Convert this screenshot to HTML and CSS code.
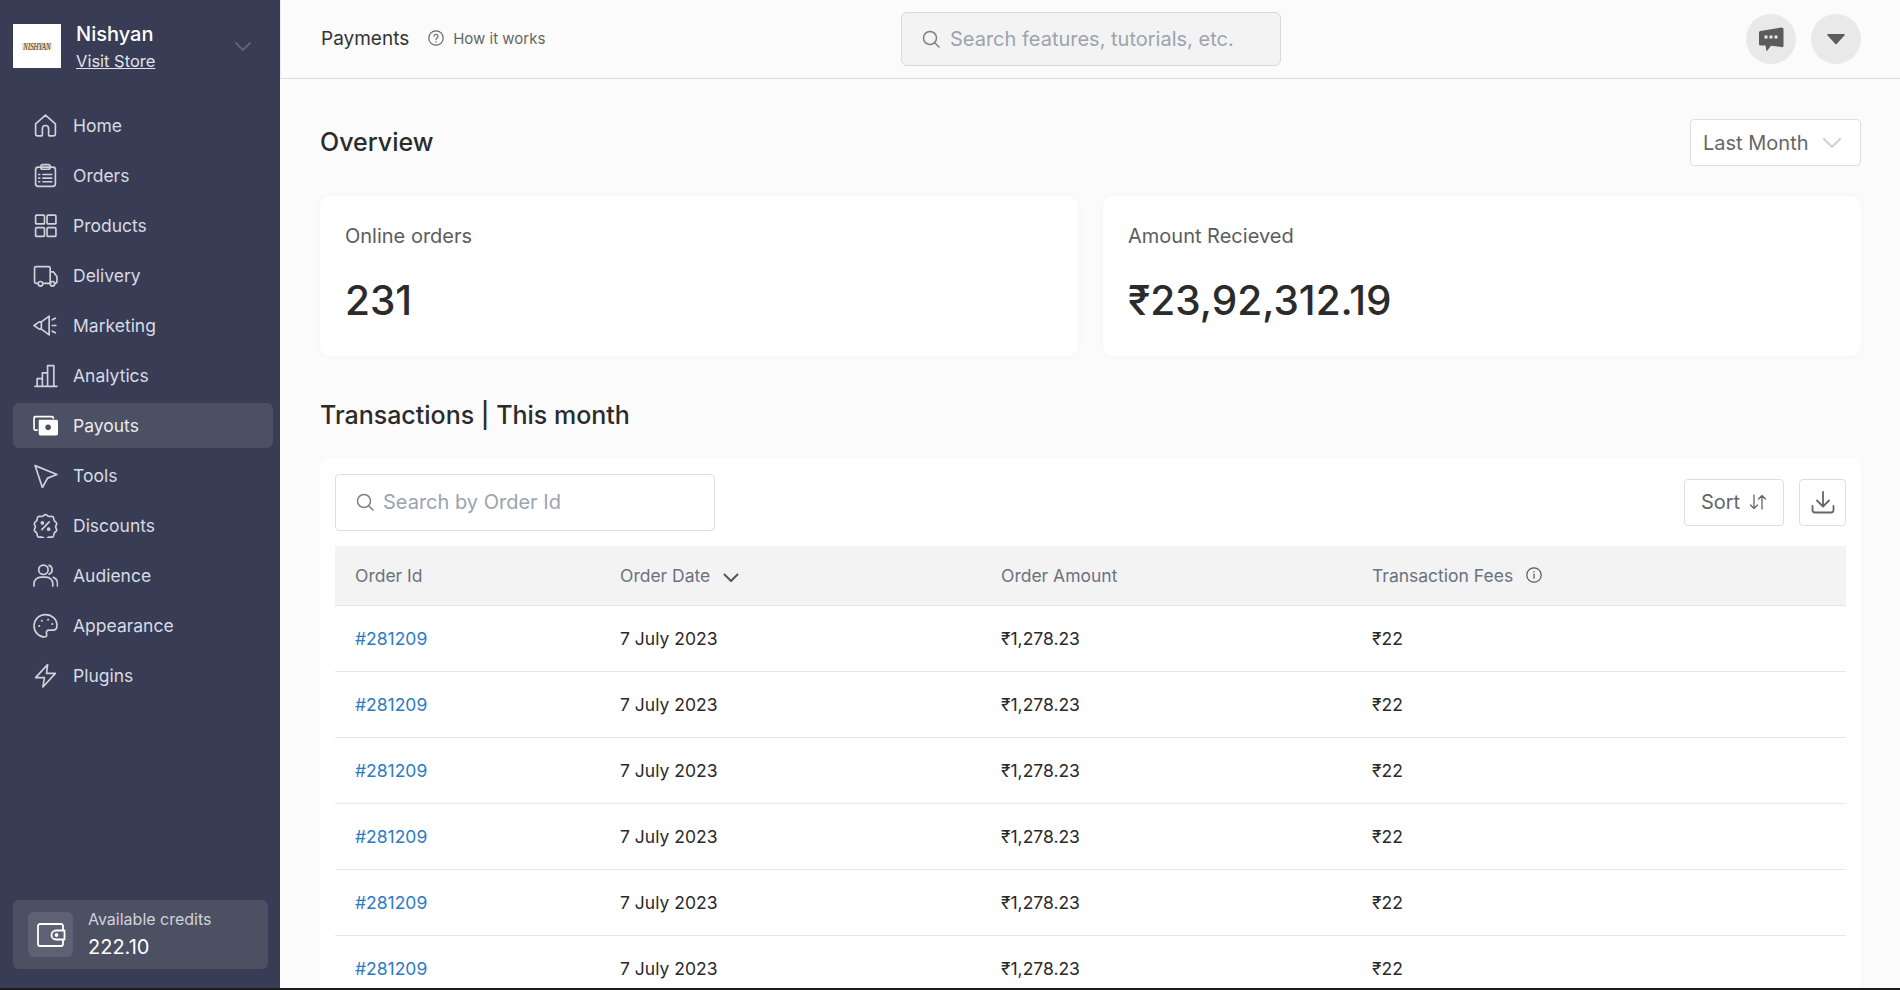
FILE: index.html
```html
<!DOCTYPE html>
<html lang="en">
<head>
    <meta charset="UTF-8">
    <meta name="viewport" content="width=device-width, initial-scale=1.0">
    <title>Payments - Nishyan</title>
    <link rel="stylesheet" href="styles.css">
</head>
<body>
    <div class="app">
        <aside class="sidebar">
            <div class="store">
                <div class="store-logo"><span>Nishyan</span></div>
                <div class="store-info">
                    <div class="store-name">Nishyan</div>
                    <a href="#" class="store-link">Visit Store</a>
                </div>
                <svg class="store-caret" viewBox="0 0 16 10" width="16" height="10"><path d="M1 1l7 7 7-7"/></svg>
            </div>

            <nav class="nav">
                <a href="#" class="nav-item">
                    <svg viewBox="0 0 24 24"><path d="M2.500 10.500L12 2l9.500 8.500V20a2 2 0 0 1-2 2H16a1 1 0 0 1-1-1v-6a3 3 0 0 0-6 0v6a1 1 0 0 1-1 1H4.500a2 2 0 0 1-2-2z"/></svg>
                    Home
                </a>
                <a href="#" class="nav-item">
                    <svg viewBox="0 0 24 24"><rect x="2.500" y="4" width="19" height="18.500" rx="2.500"/><rect x="7.500" y="1.500" width="9" height="4.500" rx="2"/><path d="M9.500 11H18M9.500 14.500H18M9.500 18H18M5.500 11h1M5.500 14.500h1M5.500 18h1"/></svg>
                    Orders
                </a>
                <a href="#" class="nav-item">
                    <svg viewBox="0 0 24 24"><rect x="2.500" y="2" width="8.500" height="8.500" rx="1"/><rect x="13.500" y="2" width="8.500" height="8.500" rx="1"/><rect x="2.500" y="14" width="8.500" height="8.500" rx="1"/><rect x="13.500" y="14" width="8.500" height="8.500" rx="1"/></svg>
                    Products
                </a>
                <a href="#" class="nav-item">
                    <svg viewBox="0 0 24 24"><path d="M5 19.500H3a1.500 1.500 0 0 1-1.500-1.500V5A1.500 1.500 0 0 1 3 3.500h12A1.500 1.500 0 0 1 16.500 5v14.500H9.500M16.500 8.500h3l3.500 4.500v5a1.500 1.500 0 0 1-1.500 1.500h-1M16.500 19.500h.5"/><circle cx="7.200" cy="20" r="2.200"/><circle cx="18.700" cy="20" r="2.200"/></svg>
                    Delivery
                </a>
                <a href="#" class="nav-item">
                    <svg viewBox="0 0 24 24"><path d="M1 12l5-3.500h2L15.500 3v18L8 15.500H6z"/><path d="M8 8.500v7M18.500 6.500l3-1.500M18.500 12h3.500M18.500 17.500l3 1.500"/></svg>
                    Marketing
                </a>
                <a href="#" class="nav-item">
                    <svg viewBox="0 0 24 24"><path d="M2 22.500h21M4 22v-7h5v7M9 22V9.500h5V22M14 22V2.500h6V22"/></svg>
                    Analytics
                </a>
                <a href="#" class="nav-item active">
                    <svg viewBox="0 0 24 24"><path class="fill" fill-rule="evenodd" d="M6 6.500h16.500a1.500 1.500 0 0 1 1.500 1.500v12a1.500 1.500 0 0 1-1.500 1.500H7A1.500 1.500 0 0 1 5.500 20V7zM14.500 11a2.800 2.800 0 1 0 .01 0z"/><path d="M4 16.500H2.500A1.500 1.500 0 0 1 1 15V5a1.500 1.500 0 0 1 1.500-1.500H18A1.500 1.500 0 0 1 19.500 5"/></svg>
                    Payouts
                </a>
                <a href="#" class="nav-item">
                    <svg viewBox="0 0 24 24"><path d="M2 2.500l21 8.500-9 3.500-5 9z"/></svg>
                    Tools
                </a>
                <a href="#" class="nav-item">
                    <svg viewBox="0 0 24 24"><path d="M12 1.500c1.500 0 2 1.500 3.300 1.800 1.500.3 2.800-.6 3.900.3 1 .9.500 2.300 1.100 3.500.6 1.200 2.200 1.500 2.400 2.900.2 1.300-1 2.100-1 3.300s1.200 2 1 3.300c-.2 1.300-1.800 1.700-2.400 2.900-.6 1.100-.1 2.600-1.100 3.400-1.100.8-2.500-.1-3.900.3-1.300.3-1.800 1.800-3.300 1.800s-2-1.500-3.300-1.800c-1.400-.4-2.800.5-3.900-.3-1-.8-.5-2.300-1.100-3.400-.6-1.200-2.200-1.600-2.400-2.900-.2-1.300 1-2.100 1-3.300s-1.200-2-1-3.300c.2-1.400 1.800-1.700 2.400-2.900.6-1.200.1-2.600 1.100-3.500 1.100-.9 2.400 0 3.900-.3C10 3 10.500 1.500 12 1.500z"/><path d="M15.500 8.500l-7 7.500"/><circle cx="9" cy="9.500" r="1"/><circle cx="15" cy="15.500" r="1"/></svg>
                    Discounts
                </a>
                <a href="#" class="nav-item">
                    <svg viewBox="0 0 24 24"><circle cx="10" cy="6.500" r="4.500"/><path d="M1 22v-2.500a6.500 6.500 0 0 1 6.500-6h5a6.500 6.500 0 0 1 6.500 6V22M15.500 2.300a4.500 4.500 0 0 1 0 8.400M19.500 13.800a6 6 0 0 1 4 5.700V22"/></svg>
                    Audience
                </a>
                <a href="#" class="nav-item">
                    <svg viewBox="0 0 24 24"><path d="M12 1.500C5.700 1.500 1 6.500 1 12.500s5 10.500 10 10.500c2 0 2.500-1.500 2-3-.7-2 .3-3.500 2.500-3.500H19c2.500 0 4-2 4-4.500 0-6-5-10.500-11-10.500z"/><path d="M6 12.500h.01M8.500 7.500h.01M14.500 6.500h.01M18.500 10.500h.01" class="dots"/></svg>
                    Appearance
                </a>
                <a href="#" class="nav-item">
                    <svg viewBox="0 0 24 24"><path d="M14 1.500L2.500 14H11l-1.500 9L21.500 10H13z"/></svg>
                    Plugins
                </a>
            </nav>

            <div class="credits">
                <div class="credits-icon">
                    <svg viewBox="0 0 30 26" width="30" height="26"><path d="M27 8V4a2 2 0 0 0-2-2H4a2 2 0 0 0-2 2v18a2 2 0 0 0 2 2h21a2 2 0 0 0 2-2v-4M28.500 8.500H20a4.500 4.500 0 0 0 0 9h8.500z"/><circle cx="20.500" cy="13" r="1"/></svg>
                </div>
                <div class="credits-text">
                    <div class="credits-label">Available credits</div>
                    <div class="credits-value">222.10</div>
                </div>
            </div>
        </aside>

        <div class="page">
            <header class="topbar">
                <div class="topbar-left">
                    <span class="page-name">Payments</span>
                    <a href="#" class="how-link">
                        <svg viewBox="0 0 16 16" width="16" height="16"><circle cx="8" cy="8" r="7.200"/><path d="M6 6.200a2 2 0 1 1 3 1.800c-.7.400-1 .8-1 1.600M8 11.700v.3"/></svg>
                        How it works
                    </a>
                </div>
                <div class="top-search">
                    <svg class="search-icon" viewBox="0 0 18 18" width="18" height="18"><circle cx="8" cy="8" r="6.500"/><path d="M13 13l4 4"/></svg>
                    <span>Search features, tutorials, etc.</span>
                </div>
                <div class="topbar-right">
                    <button class="round-btn">
                        <svg viewBox="0 0 26 26" width="26" height="26"><path class="solid" d="M1 6.500Q1 5 2.500 5L23.500 1.500Q25.500 1.500 25.500 3V20Q25.500 21.500 23.500 21L13 19.800 8.500 25.500 7.500 19.500H2.500Q1 19.500 1 18z"/><rect class="gap" x="6.500" y="9.500" width="3" height="3"/><rect class="gap" x="11.500" y="9.500" width="3" height="3"/><rect class="gap" x="16.500" y="9.500" width="3" height="3"/></svg>
                    </button>
                    <button class="round-btn">
                        <svg viewBox="0 0 18 12" width="18" height="12"><path class="solid" d="M1 1h16a.8.800 0 0 1 .6 1.300L9.600 11a.8.800 0 0 1-1.200 0L.4 2.300A.8.800 0 0 1 1 1z"/></svg>
                    </button>
                </div>
            </header>

            <main class="content">
                <div class="section-head">
                    <h2>Overview</h2>
                    <div class="period">
                        Last Month
                        <svg viewBox="0 0 18 10" width="18" height="10"><path d="M1 1l8 8 8-8"/></svg>
                    </div>
                </div>

                <div class="stats">
                    <div class="stat-card">
                        <p class="stat-label">Online orders</p>
                        <p class="stat-value">231</p>
                    </div>
                    <div class="stat-card">
                        <p class="stat-label">Amount Recieved</p>
                        <p class="stat-value">₹23,92,312.19</p>
                    </div>
                </div>

                <h2 class="table-title">Transactions | This month</h2>

                <section class="table-card">
                    <div class="table-tools">
                        <div class="order-search">
                            <svg class="search-icon" viewBox="0 0 18 18" width="18" height="18"><circle cx="8" cy="8" r="6.500"/><path d="M13 13l4 4"/></svg>
                            <span>Search by Order Id</span>
                        </div>
                        <div class="tool-buttons">
                            <button class="sort-btn">
                                Sort
                                <svg viewBox="0 0 18 16" width="18" height="16"><path d="M5 1v13.500M1.500 11L5 14.500 8.500 11M13 15V1.500M9.500 5L13 1.500 16.500 5"/></svg>
                            </button>
                            <button class="download-btn">
                                <svg viewBox="0 0 24 24" width="24" height="24"><path d="M12 2v14M6 10.500l6 6 6-6M1.500 16v4a2.500 2.500 0 0 0 2.500 2.500h16a2.500 2.500 0 0 0 2.500-2.500v-4"/></svg>
                            </button>
                        </div>
                    </div>

                    <table class="orders">
                        <thead>
                            <tr>
                                <th class="col-id">Order Id</th>
                                <th class="col-date">Order Date <svg class="th-caret" viewBox="0 0 16 10" width="16" height="10"><path d="M1.500 1.500L8 8l6.500-6.500"/></svg></th>
                                <th class="col-amount">Order Amount</th>
                                <th>Transaction Fees <svg class="th-info" viewBox="0 0 16 16" width="16" height="16"><circle cx="8" cy="8" r="7.200"/><path d="M8 7.200v4M8 4.500v.5"/></svg></th>
                            </tr>
                        </thead>
                        <tbody>
                            <tr><td><a href="#">#281209</a></td><td>7 July 2023</td><td>₹1,278.23</td><td>₹22</td></tr>
                            <tr><td><a href="#">#281209</a></td><td>7 July 2023</td><td>₹1,278.23</td><td>₹22</td></tr>
                            <tr><td><a href="#">#281209</a></td><td>7 July 2023</td><td>₹1,278.23</td><td>₹22</td></tr>
                            <tr><td><a href="#">#281209</a></td><td>7 July 2023</td><td>₹1,278.23</td><td>₹22</td></tr>
                            <tr><td><a href="#">#281209</a></td><td>7 July 2023</td><td>₹1,278.23</td><td>₹22</td></tr>
                            <tr><td><a href="#">#281209</a></td><td>7 July 2023</td><td>₹1,278.23</td><td>₹22</td></tr>
                        </tbody>
                    </table>
                </section>
            </main>
        </div>
    </div>
</body>
</html>
```

FILE: styles.css
```css
:root {
    --sidebar-bg: #383c54;
    --sidebar-hover: #4c5063;
    --page-bg: #fbfbfb;
    --line: #dedede;
    --text-dark: #2b2b2b;
    --text-grey: #5f5f5f;
}

* {
    margin: 0;
    padding: 0;
    box-sizing: border-box;
}

html, body {
    height: 100%;
    overflow: hidden;
}

body {
    font-family: Inter, "Noto Sans", sans-serif;
    color: var(--text-dark);
    background-color: #1c1c1c;
}

svg {
    fill: none;
    stroke: currentColor;
    stroke-linecap: round;
    stroke-linejoin: round;
    flex-shrink: 0;
}

a {
    color: inherit;
}

.app {
    display: flex;
    height: 988px;
    overflow: hidden;
    background-color: var(--page-bg);
}

/* sidebar */
.sidebar {
    width: 280px;
    flex-shrink: 0;
    display: flex;
    flex-direction: column;
    padding: 24px 7px 19px 13px;
    background-color: var(--sidebar-bg);
}

.store {
    display: flex;
    align-items: flex-start;
    height: 44px;
}

.store-logo {
    width: 48px;
    height: 44px;
    display: flex;
    align-items: center;
    justify-content: center;
    background-color: #fff;
}

.store-logo span {
    font-family: "Liberation Serif", serif;
    font-style: italic;
    font-size: 11px;
    text-transform: uppercase;
    color: #3a3128;
    background-color: #f1dfc4;
    line-height: 7px;
    padding: 0 2px;
    white-space: nowrap;
    transform: scaleX(0.62);
}

.store-info {
    margin-left: 15px;
    margin-top: -4px;
}

.store-name {
    font-size: 20px;
    font-weight: 500;
    line-height: 28px;
    color: #fff;
}

.store-link {
    display: block;
    margin-top: 3px;
    font-size: 16.500px;
    line-height: 20px;
    color: #dfe3ee;
}

.store-caret {
    margin: 18px 22px 0 auto;
    color: #5f6373;
    stroke-width: 2;
}

.nav {
    margin-top: 35px;
    display: flex;
    flex-direction: column;
}

.nav-item {
    display: flex;
    align-items: center;
    gap: 15px;
    height: 45px;
    margin-bottom: 5px;
    padding-left: 20px;
    border-radius: 6px;
    font-size: 17.500px;
    color: #d7dbe4;
    text-decoration: none;
}

.nav-item svg {
    width: 25px;
    height: 25px;
    stroke-width: 1.600;
    color: #d0d2d9;
}

.nav-item .fill {
    fill: #fff;
    stroke: none;
}

.nav-item .dots {
    stroke-width: 2;
}

.nav-item.active {
    background-color: var(--sidebar-hover);
    color: #e9ebf1;
}

.nav-item.active svg {
    color: #fff;
}

.credits {
    margin-top: auto;
    display: flex;
    align-items: center;
    gap: 15px;
    width: 255px;
    height: 69px;
    padding-left: 15px;
    border-radius: 6px;
    background-color: var(--sidebar-hover);
}

.credits-icon {
    width: 45px;
    height: 45px;
    display: flex;
    align-items: center;
    justify-content: center;
    border-radius: 6px;
    background-color: #5d6173;
    color: #fff;
}

.credits-icon svg {
    stroke-width: 1.800;
}

.credits-text {
    margin-bottom: 2px;
}

.credits-label {
    font-size: 16px;
    line-height: 22px;
    color: #cfd3de;
}

.credits-value {
    margin-top: 4px;
    font-size: 20px;
    line-height: 26px;
    color: #fff;
}

/* top bar */
.page {
    flex: 1;
    min-width: 0;
    display: flex;
    flex-direction: column;
}

.topbar {
    height: 79px;
    flex-shrink: 0;
    display: grid;
    grid-template-columns: 1fr 380px 1fr;
    align-items: center;
    padding: 0 39px 0 40px;
    border-bottom: 1px solid var(--line);
    border-left: 1px solid #ececec;
}

.topbar-left {
    display: flex;
    align-items: center;
    gap: 19px;
    margin-bottom: 2px;
}

.page-name {
    font-size: 19px;
    color: #333;
}

.how-link {
    display: flex;
    align-items: center;
    gap: 9px;
    font-size: 15px;
    color: #666;
    text-decoration: none;
}

.how-link svg {
    stroke-width: 1.200;
}

.top-search {
    height: 54px;
    display: flex;
    align-items: center;
    gap: 10px;
    padding-left: 20px;
    border: 1px solid #d9d9d9;
    border-radius: 6px;
    background-color: #f3f3f3;
    font-size: 20px;
    color: #9ca3af;
}

.search-icon {
    color: #808080;
    stroke-width: 1.500;
}

.topbar-right {
    display: flex;
    justify-content: flex-end;
    gap: 15px;
}

.round-btn {
    width: 50px;
    height: 50px;
    display: flex;
    align-items: center;
    justify-content: center;
    border: none;
    border-radius: 50%;
    background-color: #e9e9e9;
}

.solid {
    fill: #5c5c5c;
    stroke: none;
}

.gap {
    fill: #e9e9e9;
    stroke: none;
}

/* content */
.content {
    padding: 40px 39px 0 40px;
}

.section-head {
    display: flex;
    align-items: center;
    justify-content: space-between;
    height: 46px;
}

h2 {
    font-size: 25px;
    font-weight: 500;
    color: var(--text-dark);
}

.period {
    width: 171px;
    height: 47px;
    display: flex;
    align-items: center;
    justify-content: space-between;
    padding: 2px 19px 0 12px;
    border: 1px solid var(--line);
    border-radius: 4px;
    background-color: #fff;
    font-size: 20px;
    color: #666;
}

.period svg {
    color: #d0d0d0;
    stroke-width: 2;
}

.stats {
    display: grid;
    grid-template-columns: 1fr 1fr;
    gap: 25px;
    margin-top: 31px;
}

.stat-card {
    height: 160px;
    padding: 27px 25px;
    border-radius: 10px;
    background-color: #fff;
    box-shadow: 0 0 6px rgba(0,0,0,0.03);
}

.stat-label {
    font-size: 20px;
    line-height: 26px;
    color: #5c5c5c;
}

.stat-value {
    margin-top: 26px;
    font-size: 40.500px;
    line-height: 52px;
    font-weight: 500;
    color: var(--text-dark);
}

.table-title {
    margin-top: 41px;
    line-height: 36px;
}

.table-card {
    margin-top: 25px;
    padding: 16px 15px 0;
    border-radius: 10px 10px 0 0;
    background-color: #fff;
}

.table-tools {
    display: flex;
    align-items: center;
    justify-content: space-between;
    height: 56px;
    margin-bottom: 16px;
}

.order-search {
    width: 380px;
    height: 57px;
    display: flex;
    align-items: center;
    gap: 9px;
    padding-left: 20px;
    border: 1px solid var(--line);
    border-radius: 4px;
    font-size: 20px;
    color: #9ca3af;
}

.tool-buttons {
    display: flex;
    gap: 15px;
}

.sort-btn, .download-btn {
    height: 47px;
    display: flex;
    align-items: center;
    justify-content: center;
    border: 1px solid var(--line);
    border-radius: 4px;
    background-color: #fff;
    font-family: inherit;
    color: #666;
}

.sort-btn {
    width: 100px;
    gap: 9px;
    font-size: 20px;
}

.sort-btn svg {
    stroke-width: 1.300;
}

.download-btn {
    width: 47px;
}

.download-btn svg {
    stroke-width: 1.800;
}

.orders {
    width: 100%;
    border-collapse: collapse;
    table-layout: fixed;
}

.orders th {
    height: 59px;
    padding-left: 20px;
    background-color: #f3f3f3;
    border-bottom: 1px solid #e6e8ec;
    text-align: left;
    font-size: 17.500px;
    font-weight: 400;
    color: #6b7280;
}

.orders th svg {
    vertical-align: -1px;
}

.col-id {
    width: 265px;
}

.col-date {
    width: 381px;
}

.col-amount {
    width: 371px;
}

.th-caret {
    margin-left: 8px;
    color: #555;
    stroke-width: 2;
}

.th-info {
    margin-left: 8px;
    color: #555;
    stroke-width: 1.200;
    vertical-align: -2px;
}

.orders td {
    height: 66px;
    padding-left: 20px;
    border-bottom: 1px solid #e8e8ec;
    font-size: 17.500px;
    color: #2a2a2a;
}

.orders td a {
    color: #2b7bc4;
    text-decoration: none;
}
```
